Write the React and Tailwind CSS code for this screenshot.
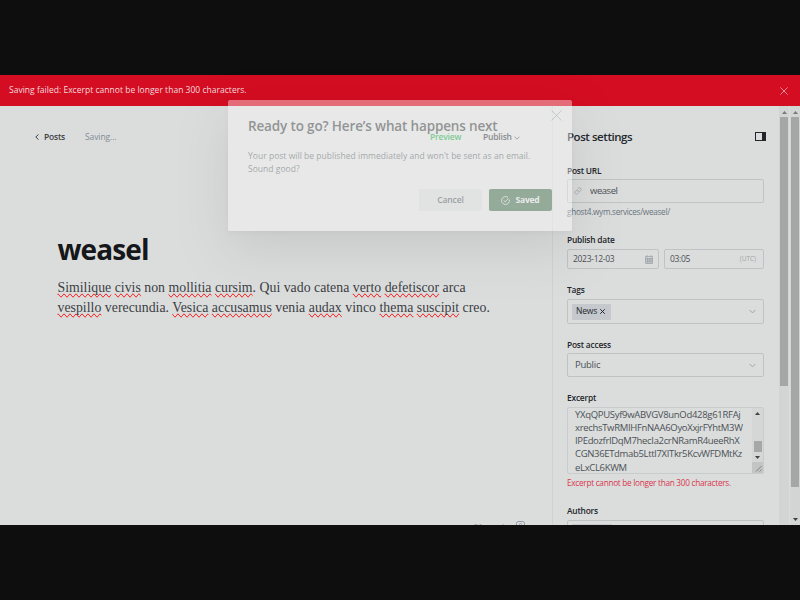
import React from "react";

function Line({ className = "", children }) {
  return <div className={"whitespace-nowrap " + className}>{children}</div>;
}

function Misspelt({ children }) {
  return <span className="[text-decoration-line:spelling-error]">{children}</span>;
}

function Chevron({ className }) {
  return (
    <svg className={className} viewBox="0 0 8 5" fill="none" stroke="currentColor">
      <path d="M0.7 0.8 4 4.1 7.3 0.8" />
    </svg>
  );
}

function Close({ className }) {
  return (
    <svg className={className} viewBox="0 0 10 10" fill="none" stroke="currentColor">
      <path d="M0.5 0.5 9.5 9.5M9.5 0.5 0.5 9.5" />
    </svg>
  );
}

function Arrow({ up = false, className = "" }) {
  return (
    <svg className={"h-[3px] w-[5px] " + className} viewBox="0 0 5 3" fill="currentColor">
      <path d={up ? "M0 3 2.5 0 5 3z" : "M0 0 2.5 3 5 0z"} />
    </svg>
  );
}

function Banner() {
  return (
    <div className="flex h-[31px] items-center justify-between bg-[#d40d22] pr-[12px] pl-[9px] text-[#f3d9dc]">
      <Line className="text-[8.5px] tracking-[0.02px]">
        Saving failed: Excerpt cannot be longer than 300 characters.
      </Line>
      <Close className="size-[8px] text-[#efb0b7]" />
    </div>
  );
}

function Editor() {
  return (
    <main className="flex w-[552px] flex-col overflow-hidden">
      <div className="mt-[22px] flex h-[18px] items-center pl-[35px] text-[8.5px] leading-[18px]">
        <svg className="mr-[5px] h-[6px] w-[4px] text-[#3c4145]" viewBox="0 0 4 6" fill="none" stroke="currentColor">
          <path d="M3.5 0.4 0.8 3 3.5 5.6" />
        </svg>
        <Line className="w-[41px] font-semibold text-[#3b4146] tracking-[-0.2px]">Posts</Line>
        <Line className="w-[345px] text-[#818c96] tracking-[-0.1px]">Saving...</Line>
        <Line className="w-[53px] font-semibold text-[#1fae50] tracking-[-0.2px]">Preview</Line>
        <Line className="font-semibold text-[#394047] tracking-[-0.2px]">Publish</Line>
        <Chevron className="mt-[2px] ml-[2px] h-[4px] w-[6px] text-[#394047]" />
      </div>
      <div className="pl-[57.5px]">
        <h1 className="mt-[83px] h-[40px] text-[28px] leading-[40px] font-bold tracking-[-0.9px] whitespace-nowrap text-[#15171a]">
          weasel
        </h1>
        <div className="mt-[9px] font-['Liberation_Serif',serif] text-[13.8px] leading-[20px] text-[#3b4045]">
          <Line className="tracking-[0.01px]">
            <Misspelt>Similique</Misspelt> <Misspelt>civis</Misspelt> non <Misspelt>mollitia</Misspelt>{" "}
            <Misspelt>cursim</Misspelt>. Qui vado catena <Misspelt>verto</Misspelt> <Misspelt>defetiscor</Misspelt> arca
          </Line>
          <Line className="tracking-[0.02px]">
            <Misspelt>vespillo</Misspelt> verecundia. <Misspelt>Vesica</Misspelt> <Misspelt>accusamus</Misspelt> venia{" "}
            <Misspelt>audax</Misspelt> vinco <Misspelt>thema</Misspelt> <Misspelt>suscipit</Misspelt> creo.
          </Line>
        </div>
      </div>
      <div className="mt-auto flex h-[4px] justify-end gap-[8px] overflow-hidden pr-[27px] text-[8px] leading-[10px] text-[#8f99a3]">
        <Line>21 words</Line>
        <svg className="size-[9px]" viewBox="0 0 9 9" fill="none" stroke="currentColor">
          <rect x="0.5" y="0.5" width="8" height="8" rx="2" />
          <path d="M3 3.5Q4.5 1.5 6 3.5" />
        </svg>
      </div>
    </main>
  );
}

function Label({ className = "", children }) {
  return (
    <Line className={"h-[12px] text-[8.4px] leading-[12px] font-semibold tracking-[-0.2px] text-[#22262b] " + className}>
      {children}
    </Line>
  );
}

const field = "flex w-[197px] items-center rounded-[2px] border border-[#bfc3c3] text-[#4b5157] ";

function Settings() {
  return (
    <aside className="w-[227px] overflow-hidden border-l border-[#cfd2d2] pl-[14px]">
      <div className="mt-[21px] flex h-[20px] w-[199px] items-center justify-between">
        <Line className="text-[11.5px] font-semibold tracking-[-0.45px] text-[#24282d]">Post settings</Line>
        <svg className="-mt-[2px] h-[9px] w-[11px] text-[#22262a]" viewBox="0 0 11 9" fill="none" stroke="currentColor">
          <rect x="0.5" y="0.5" width="10" height="8" />
          <path d="M7 0h4v9H7z" fill="currentColor" stroke="none" />
        </svg>
      </div>

      <Label className="mt-[18px]">Post URL</Label>
      <div className={field + "mt-[2px] h-[24px] pl-[6px]"}>
        <svg className="size-[8px] text-[#9fa5a9]" viewBox="0 0 24 24" fill="none" stroke="currentColor" strokeWidth="2.4">
          <path d="M10 13a5 5 0 0 0 7.5.5l3-3a5 5 0 0 0-7-7l-1.700 1.700M14 11a5 5 0 0 0-7.500-.5l-3 3a5 5 0 0 0 7 7l1.700-1.700" />
        </svg>
        <Line className="ml-[8px] pt-px text-[9.500px] tracking-[-0.45px]">weasel</Line>
      </div>
      <Line className="mt-[3px] h-[12px] text-[8.2px] leading-[12px] tracking-[-0.29px] text-[#69747f]">ghost4.wym.services/weasel/</Line>

      <Label className="mt-[16px]">Publish date</Label>
      <div className="mt-[3px] flex gap-[5px] text-[8.5px]">
        <div className={field + "h-[20px] max-w-[92px] justify-between pr-[5px] pl-[5px]"}>
          <Line className="tracking-[-0.3px]">2023-12-03</Line>
          <svg className="h-[9px] w-[8px] text-[#9da3a7]" viewBox="0 0 8 9" fill="none" stroke="currentColor" strokeWidth="0.8">
            <path d="M0.500 1.500h7v7h-7zM0.500 3.500h7M0.500 5h7M0.500 6.700h7M2.500 3v5.500M4.200 3v5.500M5.900 3v5.500M2 0v2.500M6 0v2.500" />
          </svg>
        </div>
        <div className={field + "h-[20px] max-w-[100px] justify-between pr-[7px] pl-[5px]"}>
          <Line className="tracking-[-0.35px]">03:05</Line>
          <Line className="text-[6.500px] text-[#a0a6aa]">(UTC)</Line>
        </div>
      </div>

      <Label className="mt-[15px]">Tags</Label>
      <div className={field + "mt-[3px] h-[25px] justify-between pr-[7px] pl-[4px]"}>
        <div className="flex h-[16px] w-[39px] items-center gap-[3px] rounded-[1px] bg-[#c5c9cd] pl-[4px] text-[#23282d]">
          <Line className="text-[8.5px] tracking-[-0.15px]">News</Line>
          <Close className="size-[5px] [stroke-width:2]" />
        </div>
        <Chevron className="h-[5px] w-[7px] text-[#979da1]" />
      </div>

      <Label className="mt-[15px]">Post access</Label>
      <div className={field + "mt-[2px] h-[24px] justify-between pr-[7px] pl-[7px]"}>
        <Line className="pt-px text-[9.500px] tracking-[-0.25px]">Public</Line>
        <Chevron className="h-[5px] w-[7px] text-[#979da1]" />
      </div>

      <Label className="mt-[15px]">Excerpt</Label>
      <div className="mt-[3px] flex h-[67px] w-[197px] justify-between overflow-hidden rounded-[2px] border border-[#c9cccc] pl-[7px] text-[#4b5157]">
        <div className="text-[9.500px] leading-[13.150px]">
          <Line className="tracking-[-0.3px]">YXqQPUSyf9wABVGV8unOd428g61RFAj</Line>
          <Line className="tracking-[-0.32px]">xrechsTwRMIHFnNAA6OyoXxjrFYhtM3W</Line>
          <Line className="tracking-[-0.34px]">IPEdozfrIDqM7hecIa2crNRamR4ueeRhX</Line>
          <Line className="tracking-[-0.33px]">CGN36ETdmab5Lttl7XITkr5KcvWFDMtKz</Line>
          <Line className="tracking-[-0.33px]">eLxCL6KWM</Line>
        </div>
        <div className="flex w-[11px] shrink-0 flex-col items-center bg-[#d5d7d7] text-[#3f4244]">
          <Arrow up className="mt-[4px]" />
          <div className="mt-[26px] h-[11px] w-[8px] bg-[#a6a8a7]" />
          <Arrow className="mt-[4px]" />
          <svg className="mt-auto h-[11px] w-[11px] bg-[#c3c5c4]" viewBox="0 0 11 11" stroke="#6f7272" strokeWidth="0.8">
            <path d="M4 9.500 9.500 4M7.500 9.500 9.500 7.500" />
          </svg>
        </div>
      </div>
      <Line className="mt-[3px] h-[12px] text-[8.2px] leading-[12px] tracking-[-0.26px] text-[#d8374e]">
        Excerpt cannot be longer than 300 characters.
      </Line>

      <Label className="mt-[16px]">Authors</Label>
      <div className="mt-[3px] h-[25px] w-[197px] rounded-[2px] border border-[#bfc3c3] pt-[3px] pl-[4px]">
        <div className="h-[16px] w-[40px] bg-[#c5c9cd]" />
      </div>
    </aside>
  );
}

function Scrollbars() {
  return (
    <div className="flex w-[21px] bg-[#d3d5d4] text-[#77797a]">
      <div className="flex w-[10px] flex-col items-center">
        <Arrow up className="mt-[5px]" />
        <div className="mt-[3px] h-[269px] w-[8px] bg-[#a5a7a6]" />
      </div>
      <div className="flex w-[11px] flex-col items-center border-l border-[#dbdddc]">
        <Arrow up className="mt-[5px]" />
        <div className="mt-[3px] h-[370px] w-[8px] bg-[#a5a7a6]" />
        <Arrow className="mt-auto mb-[4px] text-[#3f4244]" />
      </div>
    </div>
  );
}

function PublishModal() {
  return (
    <div className="absolute top-[100px] left-[228px] flex h-[131px] w-[344px] flex-col rounded-[2px] bg-[#fcfafa] px-[20px] opacity-40 shadow-[0_2px_5px_rgba(0,0,0,0.08),0_18px_50px_rgba(0,0,0,0.22)]">
      <Close className="absolute top-[10px] right-[10px] size-[11px] text-[#8c9499] [stroke-width:0.7]" />
      <Line className="mt-[16px] h-[20px] text-[13.500px] leading-[20px] font-semibold tracking-[-0.15px] text-[#24272a]">
        Ready to go? Here’s what happens next
      </Line>
      <div className="mt-[13px] text-[8.5px] leading-[13px] text-[#50585f]">
        <Line className="tracking-[0.03px]">Your post will be published immediately and won't be sent as an email.</Line>
        <Line className="tracking-[0.03px]">Sound good?</Line>
      </div>
      <div className="mt-[14px] flex justify-end gap-[7px] text-[8.5px]">
        <div className="flex h-[22px] w-[63px] items-center justify-center rounded-[2px] bg-[#eaeeee] pt-px font-semibold text-[#394047]">
          <Line className="tracking-[-0.15px]">Cancel</Line>
        </div>
        <div className="flex h-[22px] w-[63px] items-center justify-center gap-[5px] rounded-[2px] bg-[#296134] font-bold text-white">
          <svg className="size-[9px]" viewBox="0 0 10 10" fill="none" stroke="currentColor" strokeWidth="0.9">
            <path d="M9.300 4A4.400 4.400 0 1 1 7.800 1.600M3 5 4.700 6.500 8.300 2.500" />
          </svg>
          <Line className="pt-px tracking-[-0.2px]">Saved</Line>
        </div>
      </div>
    </div>
  );
}

export default function App() {
  return (
    <div className="relative h-[600px] w-[800px] overflow-hidden bg-[#0e0e0e] py-[75px] font-['Open_Sans','Noto_Sans',sans-serif]">
      <div className="flex h-[450px] flex-col overflow-hidden bg-[#dbdddc]">
        <Banner />
        <div className="flex h-[419px]">
          <Editor />
          <Settings />
          <Scrollbars />
        </div>
      </div>
      <PublishModal />
    </div>
  );
}
